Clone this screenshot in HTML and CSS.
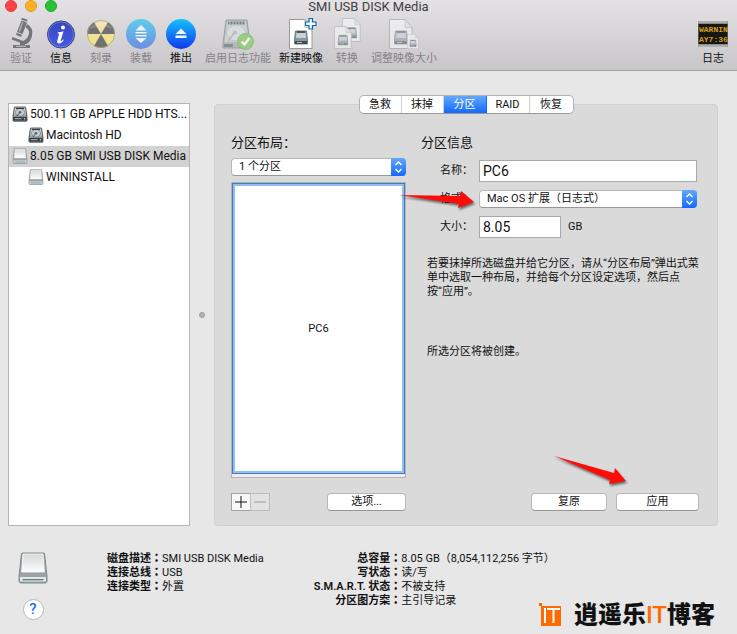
FILE: index.html
```html
<!DOCTYPE html>
<html lang="zh-CN">
<head>
<meta charset="utf-8">
<meta name="viewport" content="width=device-width, initial-scale=1">
<title>SMI USB DISK Media</title>
<link rel="stylesheet" href="styles.css">
</head>
<body>
<svg class="defs" width="0" height="0" aria-hidden="true">
  <defs>
    <linearGradient id="metal" x1="0" y1="0" x2="0" y2="1"><stop offset="0" stop-color="#b9bfc3"/><stop offset=".5" stop-color="#dde2e5"/><stop offset="1" stop-color="#8f979c"/></linearGradient>
    <linearGradient id="blue" x1="0" y1="0" x2="0" y2="1"><stop offset="0" stop-color="#14c2ff"/><stop offset="1" stop-color="#1038ee"/></linearGradient>
    <linearGradient id="sky" x1="0" y1="0" x2="0" y2="1"><stop offset="0" stop-color="#5ecdec"/><stop offset="1" stop-color="#6c8ee2"/></linearGradient>
    <linearGradient id="info" x1="0" y1="0" x2="0" y2="1"><stop offset="0" stop-color="#3448b8"/><stop offset="1" stop-color="#4a5ae6"/></linearGradient>
    <linearGradient id="plate" x1="0" y1="0" x2="0" y2="1"><stop offset="0" stop-color="#d5d8d9"/><stop offset="1" stop-color="#fdfdfd"/></linearGradient>
    <linearGradient id="burn" x1="0" y1="0" x2="0" y2="1"><stop offset="0" stop-color="#f6ddb8"/><stop offset="1" stop-color="#ece47e"/></linearGradient>
    <symbol id="hdd" viewBox="0 0 16 16">
      <path d="M2.5 1h11L15 10.5v4q0 .7-.7.7H1.7q-.7 0-.7-.7v-4z" fill="#7c858a" stroke="#3c4246" stroke-width=".8"/>
      <path d="M3 1.6h10l1.2 8.8H1.8z" fill="url(#metal)"/>
      <ellipse cx="8" cy="6.3" rx="4.5" ry="3.8" fill="#c7ced2" stroke="#687278" stroke-width=".7"/>
      <circle cx="8" cy="6.2" r="1.3" fill="#5a6368"/><path d="M8 6.2 5 10" stroke="#4b5357"/>
      <path d="M4 2.4h8" stroke="#343a3d" stroke-width="1.2"/>
      <path d="M1.4 11h13.2v3.5H1.4z" fill="#3b4246"/><path d="M3 12.7h6.5" stroke="#a9b5ba"/><circle cx="12.5" cy="12.7" r=".7" fill="#cbd5d9"/>
    </symbol>
    <symbol id="usb" viewBox="0 0 30 32">
      <path d="M4.5 1h21q1 0 1.100 1L29 24.500V29q0 2-2 2H3q-2 0-2-2v-4.500L3.400 2q.1-1 1.100-1z" fill="#9ba2a5" stroke="#7f888b"/>
      <path d="M5 2h20l1.400 18H3.600z" fill="url(#plate)" stroke="#fff" stroke-width=".8"/>
      <path d="M2 25h26v4.500H2z" fill="#dfe7e8"/><path d="M4.500 27.700h21" stroke="#657579" stroke-width="1.300"/>
    </symbol>
    <symbol id="disk-page" viewBox="0 0 24 30">
      <path d="M.5.5h15.500l7 8v21H.5z" fill="#fff" stroke="#999"/><path d="M16 .5v8h7z" fill="#e7e7e7" stroke="#aaa" stroke-width=".7"/>
      <path d="M6.500 12h11l1 9v4h-13v-4z" fill="#89969d" stroke="#59666d" stroke-width=".8"/><path d="M7.500 14h9l.5 5H7z" fill="#cad3d8"/><path d="M8 13h8" stroke="#38454c" stroke-width="1.500"/><path d="M6 22h12v3H6z" fill="#3e4d56"/><path d="M8 23.500h5" stroke="#b0c3ce"/>
    </symbol>
  </defs>
</svg>

<header class="window-head">
  <div class="titlebar">
    <div class="lights"><i class="light close"></i><i class="light minimise"></i><i class="light zoom"></i></div>
    <h1>SMI USB DISK Media</h1>
  </div>
  <nav class="toolbar" aria-label="工具栏">
    <button class="tool" disabled>
      <svg width="32" height="32" viewBox="0 0 32 32"><g fill="#747576"><path d="M16.500 2.500 22 4.500 17.500 16 12 14z"/><path d="M16 1.500l6 2 .6-1.800-5.500-1.800zM11.500 14.800l5.500 2-.8 2.200-5-2z"/><path d="M22 6q7 4 5 12-1 5-5.500 8H17v-2.500q7-3 7-9 0-3-3.500-5z"/><path d="M8 27h17v3H8z"/><path d="m7.500 19 12 4.600-.9 2.400-12-4.600z"/><path d="M15 23h5v5h-5z"/></g><path d="m17.800 4-3.600 9.500M11 28.300h10" stroke="#b4b4b5" stroke-width="1.300"/></svg>
      <span>验证</span>
    </button>
    <button class="tool">
      <svg width="32" height="32" viewBox="0 0 32 32"><circle cx="16" cy="16.500" r="13.500" fill="url(#info)" stroke="#333d80"/><circle cx="16" cy="16.500" r="12.600" fill="none" stroke="#8995e6" stroke-width=".6"/><circle cx="18" cy="9.500" r="2" fill="#fff"/><path d="M12.800 14.200q3.500-.1 5.700-1l-2.700 9q-.3 1.200.4 1 .8-.3 2-1.700l.7.600Q16.500 25.500 14 25.500q-2.400-.2-1.700-3l1.700-6q.4-1.300-1.400-1.300z" fill="#fff"/></svg>
      <span>信息</span>
    </button>
    <button class="tool" disabled>
      <svg width="32" height="32" viewBox="0 0 32 32"><circle cx="16" cy="16" r="14" fill="url(#burn)"/><g fill="#707172"><path d="M16 16H2A14 14 0 0 1 9 3.900z"/><path d="M16 16 23 3.900A14 14 0 0 1 30 16z"/><path d="M16 16l7 12.100A14 14 0 0 1 9 28.100z"/></g><circle cx="16" cy="16" r="13.600" fill="none" stroke="#a6a18e" stroke-width=".8"/><path d="M4 11Q16-3 28 11q-12-5-24 0z" fill="#fff" opacity=".18"/></svg>
      <span>刻录</span>
    </button>
    <button class="tool" disabled>
      <svg width="32" height="32" viewBox="0 0 32 32"><circle cx="16" cy="16" r="15" fill="url(#sky)"/><g fill="#f1f3f2"><path d="m16 7 5.500 5.500h-11zM10.500 14h11v1.500h-11zM10.500 17h11v1.500h-11zM16 25l-5.500-5h11z"/></g></svg>
      <span>装载</span>
    </button>
    <button class="tool">
      <svg width="32" height="32" viewBox="0 0 32 32"><circle cx="16" cy="16" r="15" fill="url(#blue)"/><path d="m16 10.500 5.500 5.500h-11zM10.500 17.500h11v2.500h-11z" fill="#f5f7f5"/></svg>
      <span>推出</span>
    </button>
    <button class="tool" disabled>
      <svg width="32" height="32" viewBox="0 0 32 32"><path d="M4 2h21l3 24v4H1v-4z" fill="#b5bbbd" stroke="#8e9698" stroke-width=".8"/><path d="M5 3h19l2.500 21h-24z" fill="#cbd1d3"/><path d="M6 5h17" stroke="#777e80" stroke-width="3" stroke-dasharray="1 .5"/><ellipse cx="14" cy="15" rx="9.500" ry="8" fill="#d7dddf" stroke="#bfc6c8"/><circle cx="13" cy="14.500" r="2" fill="#b8c0c2"/><path d="m12 15-6 8" stroke="#b4bbbd" stroke-width="1.500"/><path d="M2 26h9v3H2z" fill="#888f91"/><circle cx="23.500" cy="23.500" r="8" fill="#9bcb85" stroke="#7db56b" stroke-width=".7"/><path d="m19.500 23.500 3 3 5-6.500" fill="none" stroke="#f5f8f4" stroke-width="2.200"/></svg>
      <span>启用日志功能</span>
    </button>
    <button class="tool">
      <svg width="32" height="32" viewBox="0 0 32 32"><use href="#disk-page" x="4" y="1" width="24" height="30"/><path d="M24 .5h3.500v3.500H31v3.500h-3.500V11H24V7.500h-3.500V4H24z" fill="#eef8ff" stroke="#1268ad" stroke-width="1.200"/></svg>
      <span>新建映像</span>
    </button>
    <button class="tool" disabled>
      <svg class="faded" width="32" height="32" viewBox="0 0 32 32"><use href="#disk-page" x="11" y="0" width="19" height="24"/><use href="#disk-page" x="3" y="8" width="18" height="23"/></svg>
      <span>转换</span>
    </button>
    <button class="tool" disabled>
      <svg class="faded" width="32" height="32" viewBox="0 0 32 32"><use href="#disk-page" x="1" y="1" width="24" height="30"/><use href="#disk-page" x="19" y="16" width="12" height="15"/></svg>
      <span>调整映像大小</span>
    </button>
    <button class="tool log">
      <svg width="32" height="32" viewBox="0 0 32 32"><path d="M1 3h30v26H1z" fill="#8b8c88"/><path d="M1.500 3.500h29v1h-29zM1.500 27.500h29v1h-29z" fill="#d2d2ce"/><path d="M1.500 6h29v20h-29z" fill="#161613"/><text x="2" y="14">WARNIN</text><text x="2" y="24">AY7:36</text></svg>
      <span>日志</span>
    </button>
  </nav>
</header>

<main class="workspace">
  <ul class="disks" aria-label="磁盘">
    <li><svg width="16" height="16"><use href="#hdd"/></svg><span>500.11 GB APPLE HDD HTS...</span></li>
    <li class="volume"><svg width="16" height="16"><use href="#hdd"/></svg><span>Macintosh HD</span></li>
    <li class="selected"><svg width="16" height="16"><use href="#usb"/></svg><span>8.05 GB SMI USB DISK Media</span></li>
    <li class="volume"><svg width="16" height="16"><use href="#usb"/></svg><span>WININSTALL</span></li>
  </ul>
  <div class="splitter"><i></i></div>

  <section class="panel">
    <div class="tabs">
      <button>急救</button><button>抹掉</button><button class="active">分区</button><button>RAID</button><button>恢复</button>
    </div>
    <div class="columns">
      <div class="layout">
        <h2><label for="scheme">分区布局：</label></h2>
        <div class="popup"><select id="scheme"><option>1 个分区</option></select><svg width="15" height="18" viewBox="0 0 15 18"><path d="m4.500 7 3-3 3 3m-6 4 3 3 3-3"/></svg></div>
        <div class="map"><div class="partition">PC6</div></div>
        <div class="actions">
          <div class="plusminus">
            <button aria-label="添加"><svg width="12" height="12" viewBox="0 0 12 12"><path d="M6 0v12M0 6h12"/></svg></button>
            <button aria-label="移除" disabled><svg width="12" height="12" viewBox="0 0 12 12"><path d="M0 6h12"/></svg></button>
          </div>
          <button class="push options">选项...</button>
        </div>
      </div>
      <div class="details">
        <h2>分区信息</h2>
        <div class="form">
          <label for="name">名称：</label><input id="name" type="text" value="PC6">
          <label for="format">格式：</label>
          <div class="popup"><select id="format"><option>Mac OS 扩展（日志式）</option></select><svg width="15" height="18" viewBox="0 0 15 18"><path d="m4.500 7 3-3 3 3m-6 4 3 3 3-3"/></svg></div>
          <label for="size">大小：</label><div class="size"><input id="size" type="text" value="8.05"><span>GB</span></div>
        </div>
        <p class="hint">若要抹掉所选磁盘并给它分区，请从“分区布局”弹出式菜单中选取一种布局，并给每个分区设定选项，然后点<span class="keep">按“应用”。</span></p>
        <p class="status">所选分区将被创建。</p>
        <div class="actions end"><button class="push revert">复原</button><button class="push apply">应用</button></div>
      </div>
    </div>
    <svg class="arrow arrow-format" width="80" height="24" viewBox="0 0 80 24"><path d="m1 4 61 1 1-5 13 11-16 6 1-4z"/></svg>
    <svg class="arrow arrow-apply" width="80" height="36" viewBox="0 0 80 36"><path d="m2 1 60 17 1-5 11 13-17 3 1-4z"/></svg>
  </section>
</main>

<footer class="info">
  <div class="side">
    <svg width="30" height="32"><use href="#usb"/></svg>
    <button class="help" aria-label="帮助">?</button>
  </div>
  <dl class="first">
    <dt>磁盘描述<b lang="zh-TW">：</b></dt><dd>SMI USB DISK Media</dd>
    <dt>连接总线<b lang="zh-TW">：</b></dt><dd>USB</dd>
    <dt>连接类型<b lang="zh-TW">：</b></dt><dd>外置</dd>
  </dl>
  <dl class="second">
    <dt>总容量<b lang="zh-TW">：</b></dt><dd>8.05 GB（8,054,112,256 字节）</dd>
    <dt>写状态<b lang="zh-TW">：</b></dt><dd>读/写</dd>
    <dt>S.M.A.R.T. 状态<b lang="zh-TW">：</b></dt><dd>不被支持</dd>
    <dt>分区图方案<b lang="zh-TW">：</b></dt><dd>主引导记录</dd>
  </dl>
  <div class="brand">
    <svg width="24" height="24" viewBox="0 0 24 24"><path d="M0 0h3v3H0zM2 3h20v20H2z" fill="#ff6a00"/><path d="M6 5v15M8 6h13M14.500 6v14" stroke="#fff" stroke-width="2"/></svg>
    <strong>逍遥乐<em>IT</em>博客</strong>
  </div>
</footer>
</body>
</html>
```
FILE: styles.css
```css
* { box-sizing: border-box; }
body {
  margin: 0;
  min-height: 100vh;
  display: flex;
  flex-direction: column;
  background: #e7e7e7;
  color: #111;
  font: 11px/14px Roboto, "Noto Sans CJK SC", sans-serif;
}
h1, h2, p, ul, dl, dd { margin: 0; padding: 0; }
button, input, select { font: inherit; color: inherit; margin: 0; }
button { padding: 0; border: 0; background: none; }
.defs { position: absolute; }

.window-head {
  height: 71px;
  border-bottom: 1px solid #a5a3a5;
  background: linear-gradient(#e4e2e4, #c8c6c9);
}
.titlebar {
  height: 11px;
  display: grid;
  grid-template-columns: 1fr auto 1fr;
  align-items: center;
  padding: 0 5px;
}
.titlebar h1 { font-size: 13px; font-weight: 400; line-height: 11px; color: #414042; }
.lights { display: flex; gap: 8px; }
.light { width: 12px; height: 12px; border-radius: 50%; }
.close { background: #fc4448; border: 1px solid #e2383c; }
.minimise { background: #fdb124; border: 1px solid #e2981c; }
.zoom { background: #29c231; border: 1px solid #1ea827; }
.toolbar { display: flex; gap: 4px; padding: 7px 6px 0 3px; }
.tool {
  min-width: 36px;
  padding: 0 2px;
  display: flex;
  flex-direction: column;
  align-items: center;
  gap: 2px;
  white-space: nowrap;
}
.tool:disabled { color: #858387; }
.faded { opacity: .5; }
.log { margin-left: auto; }
.log text { font: 700 8px "Liberation Mono", monospace; fill: #d69c1e; }

.workspace { flex: 1; display: flex; padding: 32px 19px 0 8px; }
.disks {
  flex: 0 0 182px;
  min-width: 0;
  border: 1px solid #b4b4b4;
  background: #fff;
  list-style: none;
  font-size: 12px;
}
.disks li { height: 21px; display: flex; align-items: center; gap: 2px; padding: 0 0 1px 3px; white-space: nowrap; }
.disks .volume { padding-left: 19px; }
.disks .selected { background: #d2d2d2; }
.splitter { flex: 0 0 24px; display: flex; align-items: center; justify-content: center; }
.splitter i { width: 6px; height: 6px; border-radius: 50%; background: #b5b5b5; border: 1px solid #9c9c9c; }

.panel {
  position: relative;
  flex: 1;
  display: flex;
  flex-direction: column;
  margin-top: 1px;
  padding: 0 16px 14px 16px;
  border: 1px solid #d0d0d0;
  border-radius: 4px;
  background: #dadada;
}
.tabs {
  align-self: center;
  display: flex;
  margin-top: -10px;
  border: 1px solid #b2b2b2;
  border-bottom-color: #999;
  border-radius: 5px;
  overflow: hidden;
  background: #fff;
}
.tabs button { width: 42px; height: 17px; border-right: 1px solid #d0d0d0; }
.tabs button:nth-child(n+3) { width: 43px; }
.tabs button:last-child { border-right: 0; }
.tabs .active { background: linear-gradient(#62a8fb, #1469fc); border-color: #1469fc; color: #fff; }

.columns { flex: 1; display: grid; grid-template-columns: 175px 1fr; gap: 15px; padding-top: 20px; }
.layout, .details { display: flex; flex-direction: column; }
h2 { font-size: 13px; line-height: 18px; font-weight: 400; }
.layout .popup { margin: 6px 0; }
.popup {
  position: relative;
  height: 18px;
  border: 1px solid #b8b8b8;
  border-bottom-color: #989898;
  border-radius: 4px;
  background: #fff;
}
.popup select {
  display: block;
  width: 100%;
  height: 16px;
  padding: 0 20px 0 7px;
  border: 0;
  background: none;
  appearance: none;
}
.popup svg {
  position: absolute;
  top: -1px;
  right: -1px;
  border-radius: 0 4px 4px 0;
  background: linear-gradient(#62a8fb, #1469fc);
  fill: none;
  stroke: #fff;
  stroke-width: 1.5;
  pointer-events: none;
}
.map { flex: 1; display: flex; padding-bottom: 3px; border: 1px solid #b4b4b4; background: #ececec; }
.partition {
  flex: 1;
  display: flex;
  align-items: center;
  justify-content: center;
  border: 1px solid #4b79b3;
  box-shadow: inset 0 0 0 2px #8fbffa;
  background: #fff;
}
.actions { display: flex; justify-content: space-between; margin-top: 15px; }
.actions.end { justify-content: flex-end; gap: 9px; margin: auto 2px 0 0; }
.plusminus { display: flex; }
.plusminus button { width: 20px; height: 18px; display: grid; place-items: center; border: 1px solid #a2a2a2; background: #f8f8f8; }
.plusminus button:disabled { margin-left: -1px; border-color: #bcbcbc; background: #e2e2e2; }
.plusminus svg { stroke: #111; }
.plusminus button:disabled svg { stroke: #999; }
.push { height: 18px; border: 1px solid #b8b8b8; border-bottom-color: #969696; border-radius: 4px; background: #fff; }
.options { width: 79px; }
.revert { width: 76px; }
.apply { width: 83px; }

.form {
  display: grid;
  grid-template-columns: 52px 1fr;
  gap: 8px 6px;
  align-items: center;
  margin: 8px 4px 0 0;
}
.form label { text-align: right; }
.form input { width: 100%; height: 22px; padding: 0 3px; border: 1px solid #a9a9a9; background: #fff; font-size: 14px; }
.size { display: flex; align-items: center; gap: 7px; }
.form .size input { width: 82px; }
.hint { margin-top: 19px; padding-left: 6px; }
.keep { white-space: nowrap; }
.status { margin-top: 46px; padding-left: 6px; }

.arrow { position: absolute; fill: #fe0d08; filter: drop-shadow(1px 2px 1px #0008); pointer-events: none; overflow: visible; }
.arrow-format { left: 183px; top: 86px; }
.arrow-apply { right: 85px; top: 350px; }

.info { position: relative; display: flex; padding: 26px 22px 14px 18px; }
.side { display: flex; flex-direction: column; align-items: center; gap: 15px; }
.help {
  width: 21px;
  height: 21px;
  border: 1px solid #b9b9b9;
  border-radius: 50%;
  background: #fff;
  color: #1a6df8;
  font-size: 15px;
  font-weight: 500;
  line-height: 19px;
}
.info dl { display: grid; grid-template-columns: auto auto; grid-auto-rows: 14px; align-content: start; white-space: nowrap; }
.info dt { text-align: right; font-weight: 600; }
.info dt b { font-family: "Noto Sans CJK TC", sans-serif; line-height: 10px; }
.first { margin-left: 59px; }
.second { margin-left: 50px; }
.brand { position: absolute; right: 22px; bottom: 7px; display: flex; align-items: center; gap: 11px; }
.brand strong { font-size: 24px; font-weight: 900; line-height: 24px; white-space: nowrap; }
.brand em { color: #ff6a00; font-style: normal; font-weight: 500; }
```
